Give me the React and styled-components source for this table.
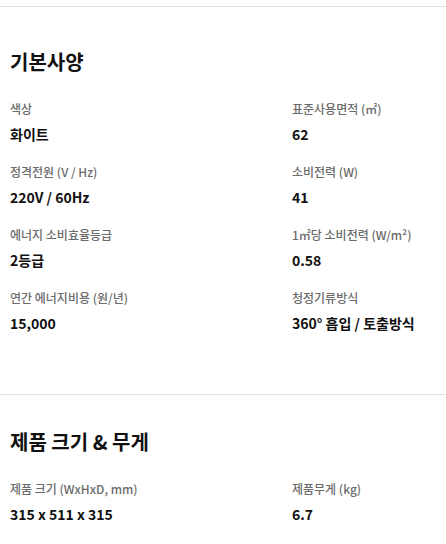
import React from "react";
import styled, { createGlobalStyle } from "styled-components";

const GlobalStyle = createGlobalStyle`
  body {
    margin: 0;
    background: #fff;
    font-family: "Noto Sans CJK KR", "Noto Sans", sans-serif;
    color: #111;
  }
`;

const specs = [
  {
    title: "기본사양",
    items: [
      ["색상", "화이트"],
      ["표준사용면적 (㎡)", "62"],
      ["정격전원 (V / Hz)", "220V / 60Hz"],
      ["소비전력 (W)", "41"],
      ["에너지 소비효율등급", "2등급"],
      ["1㎡당 소비전력 (W/m²)", "0.58"],
      ["연간 에너지비용 (원/년)", "15,000"],
      ["청정기류방식", "360° 흡입 / 토출방식"],
    ],
  },
  {
    title: "제품 크기 & 무게",
    items: [
      ["제품 크기 (WxHxD, mm)", "315 x 511 x 315"],
      ["제품무게 (kg)", "6.7"],
    ],
  },
];

export default function App() {
  return (
    <>
      <GlobalStyle />
      <Page>
        {specs.map((s, i) => (
          <Section key={i} $first={i === 0}>
            <Title>{s.title}</Title>
            <Grid>
              {s.items.map(([label, value], j) => (
                <Item key={j}>
                  <Label>{label}</Label>
                  <Value>{value}</Value>
                </Item>
              ))}
            </Grid>
          </Section>
        ))}
      </Page>
    </>
  );
}

const Page = styled.div`
  padding-top: 6px;
`;

const Section = styled.section`
  border-top: 1px solid #e3e3e3;
  padding: ${(p) => (p.$first ? "41px" : "33px")} 10px ${(p) => (p.$first ? "61px" : "20px")};
`;

const Title = styled.h2`
  margin: 0 0 24px;
  font-size: 20px;
  line-height: 28px;
  font-weight: 700;
  color: #111;
`;

const Grid = styled.div`
  display: grid;
  grid-template-columns: 282px 1fr;
  row-gap: 19px;
`;

const Item = styled.div`
  display: flex;
  flex-direction: column;
  gap: 6px;
`;

const Label = styled.div`
  font-size: 12px;
  line-height: 18px;
  font-weight: 500;
  color: #6b6b6b;
`;

const Value = styled.div`
  font-size: 14px;
  line-height: 20px;
  font-weight: 700;
  color: #111;
`;
